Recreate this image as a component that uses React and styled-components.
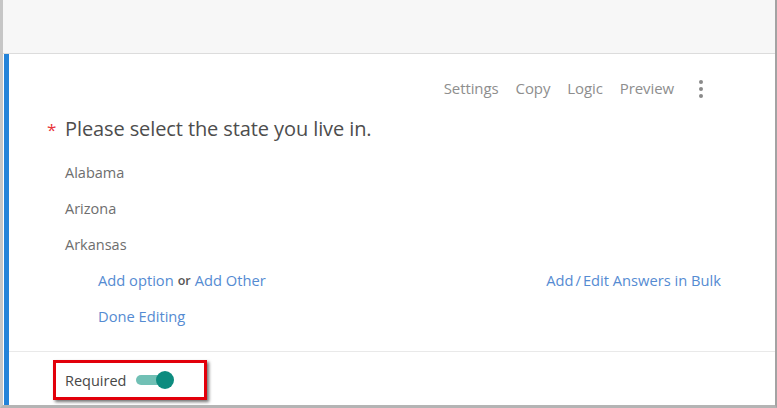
import React from "react";
import styled, { createGlobalStyle } from "styled-components";

const Global = createGlobalStyle`
  html, body { margin: 0; padding: 0; background: #ffffff; }
  body { font-family: "Open Sans", "Noto Sans", sans-serif; }
`;

const Frame = styled.div`
  width: 777px;
  height: 408px;
  box-sizing: border-box;
  display: flex;
  flex-direction: column;
  border-left: 3px solid #c6c6c6;
  border-right: 2px solid #a3a3a3;
  border-bottom: 3px solid #b4b4b4;
  overflow: hidden;
`;

const TopBand = styled.div`
  height: 53px;
  flex: none;
  background: #f7f7f7;
  border-bottom: 1px solid #dcdcdc;
`;

const Card = styled.section`
  flex: 1;
  margin-left: 1px;
  border-left: 5px solid #2383d9;
  background: #ffffff;
  display: flex;
  flex-direction: column;
`;

const Toolbar = styled.div`
  margin-top: 22px;
  height: 24px;
  display: flex;
  align-items: center;
  justify-content: flex-end;
  gap: 17px;
  padding-right: 72px;
`;

const ToolLink = styled.span`
  font-size: 15px;
  line-height: 24px;
  color: #8e8e8e;
  letter-spacing: -0.1px;
`;

const Kebab = styled.div`
  margin-left: 8px;
  margin-top: 1px;
  display: flex;
  flex-direction: column;
  gap: 3px;
  span {
    width: 4px;
    height: 4px;
    border-radius: 50%;
    background: #8a8a8a;
  }
`;

const Question = styled.h2`
  margin: 14px 0 0 0;
  height: 28px;
  display: flex;
  align-items: center;
  padding-left: 38px;
  font-size: 20px;
  font-weight: 400;
  color: #4d4d4d;
  letter-spacing: -0.1px;
`;

const Star = styled.span`
  color: #e8343a;
  font-size: 17px;
  width: 18px;
  margin-top: 2px;
`;

const Options = styled.ul`
  list-style: none;
  margin: 13px 0 0 0;
  padding: 0 0 0 56px;
`;

const Option = styled.li`
  height: 36px;
  line-height: 36px;
  font-size: 14.5px;
  color: #6e6e6e;
`;

const ActionRow = styled.div`
  height: 36px;
  box-sizing: border-box;
  padding-bottom: 2px;
  display: flex;
  align-items: center;
  padding-left: 89px;
  padding-right: 54px;
`;

const Link = styled.a`
  font-size: 14.7px;
  color: #558bd2;
  text-decoration: none;
  cursor: pointer;
`;

const Slash = styled.span`
  margin: 0 2px;
`;

const Or = styled.span`
  margin: 0 4px;
  font-size: 12.5px;
  font-weight: 600;
  color: #555555;
`;

const Push = styled.div`
  flex: 1;
`;

const Footer = styled.div`
  margin-top: 16px;
  border-top: 1px solid #e9e9e9;
  flex: 1;
  padding: 8px 0 0 44px;
`;

const Highlight = styled.div`
  width: 154px;
  height: 40px;
  box-sizing: border-box;
  border: 3px solid #e2000b;
  box-shadow: 2px 2px 3px rgba(0, 0, 0, 0.55);
  display: flex;
  align-items: center;
  padding-left: 9px;
  gap: 10px;
`;

const Label = styled.span`
  font-size: 14.5px;
  color: #474747;
`;

const Switch = styled.div`
  position: relative;
  width: 36px;
  height: 10px;
  border-radius: 5px;
  background: ${(p) => (p.on ? "#71c0b5" : "#c9c9c9")};
  &::after {
    content: "";
    position: absolute;
    top: -4px;
    left: ${(p) => (p.on ? "20px" : "-2px")};
    width: 18px;
    height: 18px;
    border-radius: 50%;
    background: ${(p) => (p.on ? "#0d8c7f" : "#f1f1f1")};
  }
`;

const choices = ["Alabama", "Arizona", "Arkansas"];

export default function App() {
  return (
    <>
      <Global />
      <Frame>
        <TopBand />
        <Card>
          <Toolbar>
            <ToolLink>Settings</ToolLink>
            <ToolLink>Copy</ToolLink>
            <ToolLink>Logic</ToolLink>
            <ToolLink>Preview</ToolLink>
            <Kebab>
              <span />
              <span />
              <span />
            </Kebab>
          </Toolbar>
          <Question>
            <Star>*</Star>
            Please select the state you live in.
          </Question>
          <Options>
            {choices.map((c) => (
              <Option key={c}>{c}</Option>
            ))}
          </Options>
          <ActionRow>
            <Link>Add option</Link>
            <Or>or</Or>
            <Link>Add Other</Link>
            <Push />
            <Link>
              Add<Slash>/</Slash>Edit Answers in Bulk
            </Link>
          </ActionRow>
          <ActionRow>
            <Link>Done Editing</Link>
          </ActionRow>
          <Footer>
            <Highlight>
              <Label>Required</Label>
              <Switch on />
            </Highlight>
          </Footer>
        </Card>
      </Frame>
    </>
  );
}
